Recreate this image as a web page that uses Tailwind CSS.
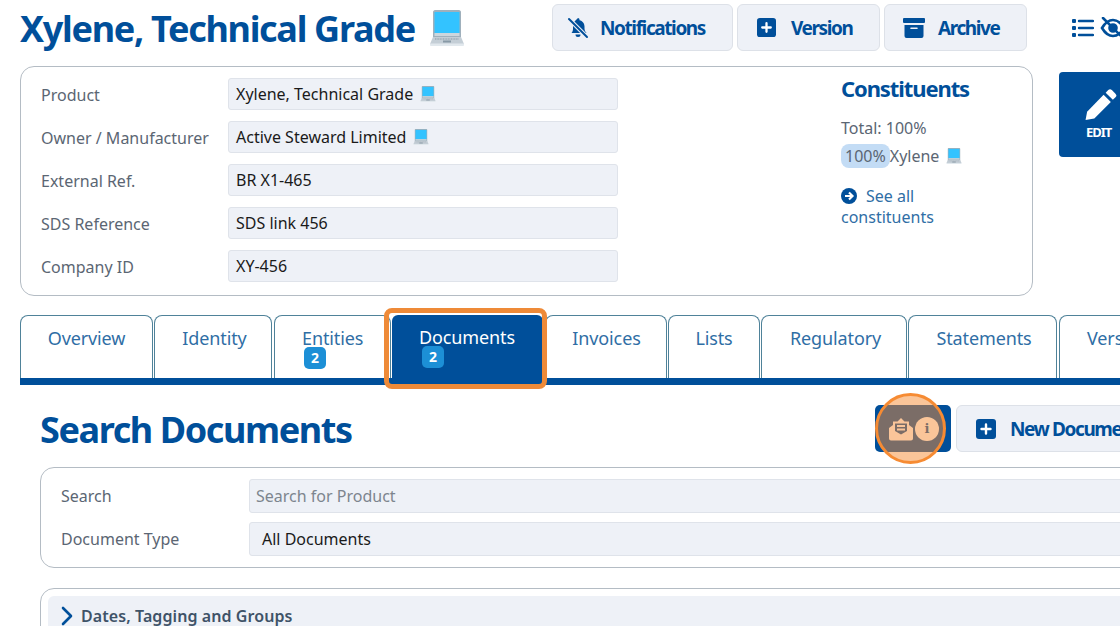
<!DOCTYPE html>
<html lang="en">
<head>
  <meta charset="UTF-8" />
  <title>Xylene, Technical Grade</title>
  <script src="https://cdn.jsdelivr.net/npm/@tailwindcss/browser@4"></script>
</head>
<body class="bg-white font-['Noto_Sans',sans-serif] overflow-hidden">
<svg class="hidden">
  <symbol id="laptop" viewBox="0 0 36 36">
    <path fill="#9fb0bc" d="M4 2C4 1 5 0 6 0h24c1 0 2 1 2 2v26H4z"/>
    <rect x="5.500" y="2" width="25" height="21" fill="#33c3ff"/>
    <rect x="5.500" y="23" width="25" height="3" fill="#ccd6dd"/>
    <path fill="#c4ced6" d="M4 27h28l3 7H1z"/>
    <path fill="#e1e8ed" d="M1 33.500h34V35c0 .5-.5 1-1 1H2c-.5 0-1-.5-1-1z"/>
    <path d="M6 29h24" stroke="#8899a6" stroke-width="1" stroke-dasharray="1 .6"/>
    <rect x="14" y="30.500" width="8" height="2" fill="#8899a6"/>
  </symbol>
  <symbol id="squareplus" viewBox="0 0 20 20">
    <rect width="20" height="20" rx="3" fill="#004f9a"/>
    <path d="M10 5.500v9M5.500 10h9" stroke="#fff" stroke-width="2.400" stroke-linecap="round"/>
  </symbol>
</svg>

<div class="w-[1120px] h-[626px] overflow-hidden relative">
  <!-- Header -->
  <div class="h-[66px] pl-5 pt-1 flex items-start">
    <div class="w-[532px] shrink-0 flex items-center h-[47px]">
      <h1 class="pt-px text-[36px] leading-[47px] font-bold text-[#004f9a] tracking-[-1.3px] whitespace-nowrap">Xylene, Technical Grade</h1>
      <svg class="w-9 h-9 ml-[14px]"><use href="#laptop"/></svg>
    </div>
    <div class="flex shrink-0 gap-1 text-[#004f9a] text-[19px] font-bold tracking-[-1.4px]">
      <button class="w-[181px] h-[47px] flex items-center pl-[13px] gap-[10px] bg-[#eef1f7] border border-[#dde1e8] rounded-md">
        <svg viewBox="0 0 24 24" class="w-[24px] h-[24px]" fill="#004f9a">
          <path d="M12 2a1.500 1.500 0 0 1 1.500 1.500v.7c3 .6 5 3.200 5 6.300v2c0 1.500.6 3 1.600 4l.4.500H5.500c1.300-1.400 1.500-3 1.500-4.500V7z"/>
          <path d="M9.500 18.500h5a2.500 2.500 0 0 1-5 0z"/>
          <path d="M3 3l18 18" stroke="#eef1f7" stroke-width="4"/>
          <path d="M3 3l18 18" stroke="#004f9a" stroke-width="2" stroke-linecap="round"/>
        </svg>
        <span class="pt-px">Notifications</span>
      </button>
      <button class="w-[143px] h-[47px] flex items-center pl-[19px] gap-[15px] bg-[#eef1f7] border border-[#dde1e8] rounded-md">
        <svg class="w-[19px] h-[21px]"><use href="#squareplus"/></svg>
        <span class="pt-px">Version</span>
      </button>
      <button class="w-[143px] h-[47px] flex items-center pl-[18px] gap-[13px] bg-[#eef1f7] border border-[#dde1e8] rounded-md">
        <svg viewBox="0 0 22 20" class="w-[22px] h-[20px]" fill="#004f9a">
          <rect width="22" height="5" rx="1"/>
          <path fill-rule="evenodd" d="M1.500 7h19v11a2 2 0 0 1-2 2h-15a2 2 0 0 1-2-2zM8 9.500a.8.8 0 0 0 0 1.600h6a.8.8 0 0 0 0-1.600z"/>
        </svg>
        <span class="pt-px">Archive</span>
      </button>
    </div>
    <div class="flex items-center h-[47px] ml-[45px] gap-[6px] shrink-0">
      <svg viewBox="0 0 22 20" class="w-[22px] h-[20px]" fill="#004f9a">
        <rect x="0" y="1" width="4" height="4" rx="1"/><rect x="0" y="8" width="4" height="4" rx="1"/><rect x="0" y="15" width="4" height="4" rx="1"/>
        <path d="M7 3h14M7 10h14M7 17h14" stroke="#004f9a" stroke-width="2.400" stroke-linecap="round"/>
      </svg>
      <svg viewBox="0 0 26 22" class="w-[26px] h-[22px] shrink-0" fill="none" stroke="#004f9a" stroke-width="2.600">
        <path d="M2 11c3-5 7-8 11-8s8 3 11 8c-3 5-7 8-11 8s-8-3-11-8z"/>
        <circle cx="13" cy="11" r="3.500" fill="#004f9a"/>
        <path d="M3 1l20 20" stroke-linecap="round"/>
      </svg>
    </div>
  </div>

  <!-- Product summary -->
  <div class="flex items-start">
    <div class="ml-5 w-[1013px] h-[230px] border border-[#b4bcc4] rounded-[14px] pl-5 pt-[11px] flex shrink-0">
      <div class="w-[800px] flex flex-col gap-[11px] text-[16px] text-[#5b6673]">
        <div class="flex items-center h-[32px]">
          <span class="w-[187px] pt-[2px]">Product</span>
          <div class="w-[390px] h-[32px] bg-[#eef1f7] border border-[#dfe3ea] rounded-[3px] pl-[7px] flex items-center text-[#1a1a1a]">Xylene, Technical Grade<svg class="w-[16px] h-[16px] ml-[7px]"><use href="#laptop"/></svg></div>
        </div>
        <div class="flex items-center h-[32px]">
          <span class="w-[187px] pt-[2px]">Owner / Manufacturer</span>
          <div class="w-[390px] h-[32px] bg-[#eef1f7] border border-[#dfe3ea] rounded-[3px] pl-[7px] flex items-center text-[#1a1a1a]">Active Steward Limited<svg class="w-[16px] h-[16px] ml-[7px]"><use href="#laptop"/></svg></div>
        </div>
        <div class="flex items-center h-[32px]">
          <span class="w-[187px] pt-[2px]">External Ref.</span>
          <div class="w-[390px] h-[32px] bg-[#eef1f7] border border-[#dfe3ea] rounded-[3px] pl-[7px] flex items-center text-[#1a1a1a]">BR X1-465</div>
        </div>
        <div class="flex items-center h-[32px]">
          <span class="w-[187px] pt-[2px]">SDS Reference</span>
          <div class="w-[390px] h-[32px] bg-[#eef1f7] border border-[#dfe3ea] rounded-[3px] pl-[7px] flex items-center text-[#1a1a1a]">SDS link 456</div>
        </div>
        <div class="flex items-center h-[32px]">
          <span class="w-[187px] pt-[2px]">Company ID</span>
          <div class="w-[390px] h-[32px] bg-[#eef1f7] border border-[#dfe3ea] rounded-[3px] pl-[7px] flex items-center text-[#1a1a1a]">XY-456</div>
        </div>
      </div>
      <div class="w-[180px] text-[16px] text-[#5b6673]">
        <h2 class="-mt-[2px] text-[22px] leading-[24px] font-bold text-[#004f9a] tracking-[-1.1px] mb-[17px]">Constituents</h2>
        <p class="leading-[22px]">Total: 100%</p>
        <p class="mt-[5px] h-[24px] flex items-center"><span class="bg-[#c3dcf5] rounded-[8px] px-[4px] h-[24px] leading-[24px]">100%</span><span>Xylene</span><svg class="w-[16px] h-[16px] ml-[7px]"><use href="#laptop"/></svg></p>
        <a class="block mt-[18px] leading-[21px] text-[#2f6ea5]">
          <svg viewBox="0 0 20 20" class="inline w-4 h-4 mr-[9px] align-[-2px]"><circle cx="10" cy="10" r="10" fill="#004f9a"/><path d="M5 10h9M10 5.500l4.500 4.500-4.500 4.500" fill="none" stroke="#fff" stroke-width="2.600"/></svg>See all<br />constituents
        </a>
      </div>
    </div>
    <button class="ml-[26px] mt-[6px] w-[70px] h-[85px] shrink-0 bg-[#004f9a] rounded-[4px] text-white text-left flex flex-col pl-[25px] pt-4 text-[13px] leading-[16px] font-bold tracking-[-1px]">
      <svg viewBox="0 0 32 32" class="w-[33px] h-[33px]" fill="#fff">
        <path d="M1.500 31 3 23 19 6.500l7 7L10 29.500z"/>
        <path d="M21 4.500l2.500-2.500a2.500 2.500 0 0 1 3.500 0L30.500 5.500a2.500 2.500 0 0 1 0 3.500L28 11.500z"/>
      </svg>
      <span class="mt-[3px] ml-[2px]">EDIT</span>
    </button>
  </div>

  <!-- Tabs -->
  <div class="mt-[19px] ml-5 w-[1100px] h-[70px] border-b-[7px] border-[#004f9a] flex text-[18px] text-[#2f6ea5] leading-[24px] tracking-[-0.12px] overflow-hidden">
    <div class="w-[133px] h-[63px] shrink-0 border border-b-0 border-[#4f8299] rounded-t-[8px] text-center pt-[10px]">Overview</div>
    <div class="w-[118px] h-[63px] shrink-0 ml-px border border-b-0 border-[#4f8299] rounded-t-[8px] text-center pl-[3px] pt-[10px]">Identity</div>
    <div class="w-[117px] h-[63px] shrink-0 ml-[2px] border border-b-0 border-[#4f8299] rounded-t-[8px] pl-[27px] pt-[10px]">
      Entities
      <span class="block -mt-[3px] ml-[2px] w-[22px] h-[22px] bg-[#1c8fd6] rounded-[5px] text-white text-[14px] font-bold leading-[22px] text-center">2</span>
    </div>
    <div class="w-[151px] h-[63px] shrink-0 ml-px bg-[#004f9a] rounded-t-[6px] text-white pl-[27px] pt-[10px]">
      Documents
      <span class="block -mt-[3px] ml-[3px] w-[22px] h-[22px] bg-[#1c8fd6] rounded-[5px] text-white text-[14px] font-bold leading-[22px] text-center">2</span>
    </div>
    <div class="w-[122px] h-[63px] shrink-0 ml-[2px] border border-b-0 border-[#4f8299] rounded-t-[8px] text-center pl-px pt-[10px]">Invoices</div>
    <div class="w-[92px] h-[63px] shrink-0 ml-px border border-b-0 border-[#4f8299] rounded-t-[8px] text-center pt-[10px]">Lists</div>
    <div class="w-[146px] h-[63px] shrink-0 ml-px border border-b-0 border-[#4f8299] rounded-t-[8px] text-center pl-[3px] pt-[10px]">Regulatory</div>
    <div class="w-[149px] h-[63px] shrink-0 ml-px border border-b-0 border-[#4f8299] rounded-t-[8px] text-center pl-[3px] pt-[10px]">Statements</div>
    <div class="w-[130px] h-[63px] shrink-0 ml-[2px] border border-b-0 border-[#4f8299] rounded-t-[8px] pl-[27px] pt-[10px]">Versions</div>
  </div>

  <!-- Search section -->
  <div class="pl-10 w-[1300px]">
    <div class="flex items-center h-[47px] mt-5">
      <h2 class="w-[835px] pt-[2px] text-[36px] leading-[47px] font-bold text-[#004f9a] tracking-[-1.4px]">Search Documents</h2>
      <button class="w-[76px] h-[47px] bg-[#004f9a] rounded-[5px] flex items-center pl-[14px] gap-[2px]">
        <svg viewBox="0 0 24 24" class="w-[24px] h-[24px]" fill="#fff">
          <path fill-rule="evenodd" d="M4 8V4.500h4.500L12 1l3.500 3.500H20V8l4 3v10.500a2 2 0 0 1-2 2H2a2 2 0 0 1-2-2V11zM6 6.500v7.500l6 3.500 6-3.500V6.500z"/>
          <path d="M8 9h8M8 12.500h8" stroke="#fff" stroke-width="2"/>
        </svg>
        <span class="w-6 h-6 rounded-full bg-white text-[#004f9a] text-[13px] font-bold leading-6 text-center font-['DejaVu_Serif',serif]">i</span>
      </button>
      <button class="ml-[5px] w-[300px] h-[47px] bg-[#eef1f7] border border-[#dde1e8] rounded-md flex items-center pl-[19px] gap-[14px] text-[19px] font-bold tracking-[-1.4px] text-[#004f9a]">
        <svg class="w-[20px] h-[20px]"><use href="#squareplus"/></svg>
        <span class="pt-px">New Document</span>
      </button>
    </div>

    <div class="mt-[15px] w-[1200px] h-[101px] border border-[#b4bcc4] rounded-[14px] pl-5 pt-[11px] flex flex-col gap-[9px] text-[16px] text-[#5b6673]">
      <div class="flex items-center h-[34px]">
        <span class="w-[188px]">Search</span>
        <div class="w-[950px] h-[34px] bg-[#eef1f7] border border-[#dfe3ea] rounded-[3px] pl-[6px] flex items-center text-[#7d858e]">Search for Product</div>
      </div>
      <div class="flex items-center h-[34px]">
        <span class="w-[188px]">Document Type</span>
        <div class="w-[950px] h-[34px] bg-[#eef1f7] border border-[#dfe3ea] rounded-[3px] pl-3 flex items-center text-[#1a1a1a]">All Documents</div>
      </div>
    </div>

    <div class="mt-5 w-[1200px] h-[80px] border border-[#b4bcc4] rounded-[14px] p-[7px]">
      <div class="h-[60px] bg-[#eef1f7] rounded-md pl-[13px] pt-[7px] flex items-start gap-[8px] text-[16px] font-semibold tracking-[0.08px] text-[#3f5368]">
        <svg viewBox="0 0 12 20" class="w-[12px] h-[20px] mt-[3px]" fill="none" stroke="#004f9a" stroke-width="2.600" stroke-linecap="round" stroke-linejoin="round"><path d="M2 2l8 8-8 8"/></svg>
        <span class="leading-[26px]">Dates, Tagging and Groups</span>
      </div>
    </div>
  </div>

  <!-- Callout highlights -->
  <div class="absolute left-[384px] top-[308px] w-[163px] h-[81px] border-[5px] border-[#ee8a38] rounded-[8px]"></div>
  <div class="absolute left-[875px] top-[393px] w-[71px] h-[71px] rounded-full border-[3px] border-[#f68b33] bg-[#f68b33]/50"></div>
</div>
</body>
</html>
